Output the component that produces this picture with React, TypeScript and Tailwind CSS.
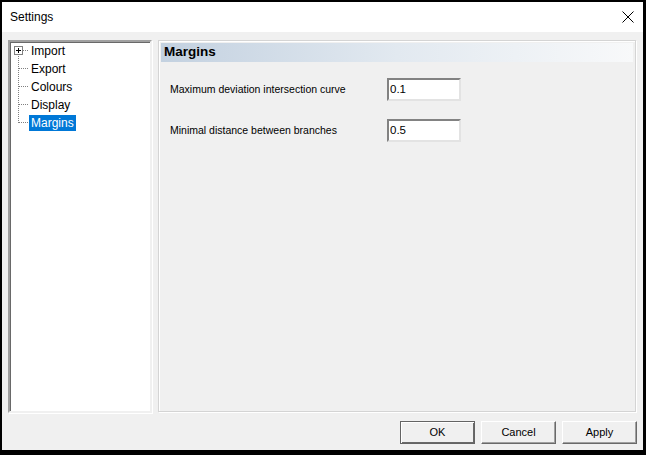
import React from "react";

const treeItems = ["Import", "Export", "Colours", "Display", "Margins"];

function TreeLines() {
  return (
    <svg
      className="absolute left-0 top-0"
      width="24"
      height="100"
      viewBox="0 0 24 100"
      shapeRendering="crispEdges"
    >
      <rect x="4.5" y="4.5" width="8" height="8" fill="#fff" stroke="#808080" />
      <line x1="6" y1="8.5" x2="11" y2="8.5" stroke="#000" />
      <line x1="8.5" y1="6" x2="8.5" y2="11" stroke="#000" />
      <line x1="13" y1="8.5" x2="19" y2="8.5" stroke="#808080" strokeDasharray="1 1" />
      <line x1="8.5" y1="14" x2="8.5" y2="81" stroke="#808080" strokeDasharray="1 1" />
      {[26, 44, 62, 80].map((y) => (
        <line key={y} x1="9" y1={y + 0.5} x2="19" y2={y + 0.5} stroke="#808080" strokeDasharray="1 1" />
      ))}
    </svg>
  );
}

function Button({ label, primary }: { label: string; primary?: boolean }) {
  return (
    <button
      className={
        "w-[75px] h-[23px] bg-[#f0f0f0] text-[11px] text-black flex items-center justify-center " +
        (primary
          ? "border border-[#646464] shadow-[inset_1px_1px_0_#ffffff,inset_-1px_-1px_0_#696969]"
          : "border border-t-white border-l-white border-b-[#696969] border-r-[#696969] shadow-[inset_-1px_-1px_0_#a0a0a0]")
      }
      style={{ fontFamily: "'Liberation Sans', Arial, sans-serif" }}
    >
      {label}
    </button>
  );
}

function Field({ label, value }: { label: string; value: string }) {
  return (
    <div className="flex items-center h-[23px]">
      <div className="w-[217px] text-[10.5px] text-black">{label}</div>
      <div className="w-[74px] h-[23px] bg-white border-2 border-t-[#828282] border-l-[#828282] border-b-[#e3e3e3] border-r-[#e3e3e3] flex items-center pl-[1px] text-[11.5px] text-black">
        {value}
      </div>
    </div>
  );
}

export default function App() {
  return (
    <div
      className="w-[646px] h-[455px] bg-black pt-[2px] pl-[2px] pr-[3px] pb-[5px]"
      style={{ fontFamily: "'Liberation Sans', Arial, sans-serif" }}
    >
      <div className="flex flex-col h-full">
        <div className="h-[30px] bg-white flex items-center justify-between pl-[8px] pr-[9px]">
          <span className="text-[12px] text-black">Settings</span>
          <svg width="12" height="12" viewBox="0 0 12 12">
            <path d="M0.5 0.5 L11.5 11.5 M11.5 0.5 L0.5 11.5" stroke="#000" strokeWidth="1" fill="none" />
          </svg>
        </div>

        <div className="flex-1 bg-[#f0f0f0] flex flex-col pl-[6px] pr-[6px] pt-[8px]">
          <div className="flex gap-[6px] h-[373px]">
            <div className="w-[144px] h-full bg-white border-2 border-t-[#a0a0a0] border-l-[#a0a0a0] border-b-[#f0f0f0] border-r-[#f0f0f0] shadow-[inset_1px_1px_0_#696969,1px_1px_0_#ffffff]">
              <div className="relative">
                <TreeLines />
                <div className="flex flex-col pl-[19px]">
                  {treeItems.map((t) => (
                    <div key={t} className="h-[18px] flex items-center">
                      <span
                        className={
                          "px-[2px] h-[16px] leading-[16px] text-[12px] " +
                          (t === "Margins" ? "bg-[#0078d7] text-white" : "text-black")
                        }
                      >
                        {t}
                      </span>
                    </div>
                  ))}
                </div>
              </div>
            </div>

            <div className="w-[478px] h-[372px] border border-[#d4d4d4] shadow-[inset_1px_1px_0_#ffffff,1px_1px_0_#ffffff] p-[2px] flex flex-col">
              <div className="h-[19px] bg-gradient-to-r from-[#c3d1e0] via-[#e2e9f0] to-[#f8f9fa] flex items-center pl-[3px]">
                <span className="text-[13.5px] font-bold text-black">Margins</span>
              </div>
              <div className="flex flex-col gap-[18px] pl-[9px] pt-[16px]">
                <Field label="Maximum deviation intersection curve" value="0.1" />
                <Field label="Minimal distance between branches" value="0.5" />
              </div>
            </div>
          </div>

          <div className="flex justify-end gap-[6px] mt-[8px]">
            <Button label="OK" primary />
            <Button label="Cancel" />
            <Button label="Apply" />
          </div>
        </div>
      </div>
    </div>
  );
}
